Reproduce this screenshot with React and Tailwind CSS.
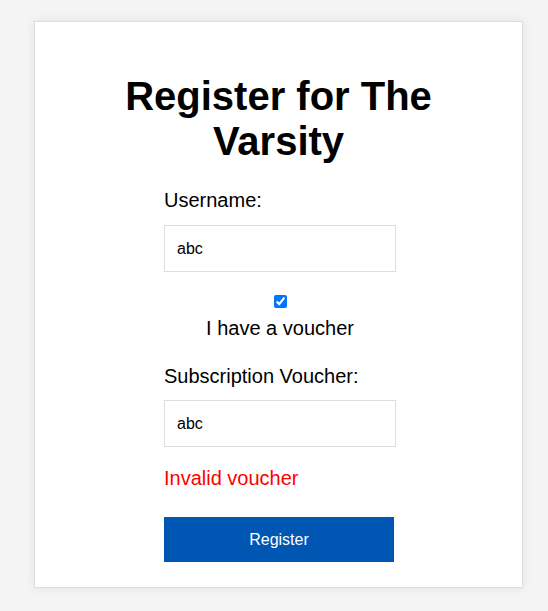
import React from 'react';

export default function App() {
  return (
    <div className="min-h-screen bg-[#f4f4f4] pt-[21px] font-['Liberation_Sans',Arial,sans-serif] text-black">
      <div className="ml-[34px] w-[489px] border border-[#ddd] bg-white pt-[52px] pb-[25px] shadow-[0_0_10px_rgba(0,0,0,0.08)]">
        <h1 className="mx-auto max-w-[360px] text-center text-[40px] font-bold leading-[45px]">
          Register for The Varsity
        </h1>

        <form className="ml-[129px] mt-[25px] w-[232px]" onSubmit={(e) => e.preventDefault()}>
          <label htmlFor="username" className="block text-[20px] leading-[23px]">
            Username:
          </label>
          <input
            id="username"
            defaultValue="abc"
            className="mt-[13px] block h-[47px] w-[232px] border border-[#ddd] px-3 text-[16px] text-black outline-none"
          />

          <div className="flex flex-col items-center">
            <input type="checkbox" defaultChecked className="mt-[23px] h-[13px] w-[13px]" />
            <span className="mt-[9px] text-[20px] leading-[23px]">I have a voucher</span>
          </div>

          <label htmlFor="voucher" className="mt-[25px] block text-[20px] leading-[23px]">
            Subscription Voucher:
          </label>
          <input
            id="voucher"
            defaultValue="abc"
            className="mt-[12px] block h-[47px] w-[232px] border border-[#ddd] px-3 text-[16px] text-black outline-none"
          />

          <p className="mt-[20px] text-[20px] leading-[23px] text-[#ff0000]">Invalid voucher</p>

          <button
            type="submit"
            className="mt-[27px] block h-[45px] w-[230px] bg-[#0056b3] text-[16px] text-white"
          >
            Register
          </button>
        </form>
      </div>
    </div>
  );
}
